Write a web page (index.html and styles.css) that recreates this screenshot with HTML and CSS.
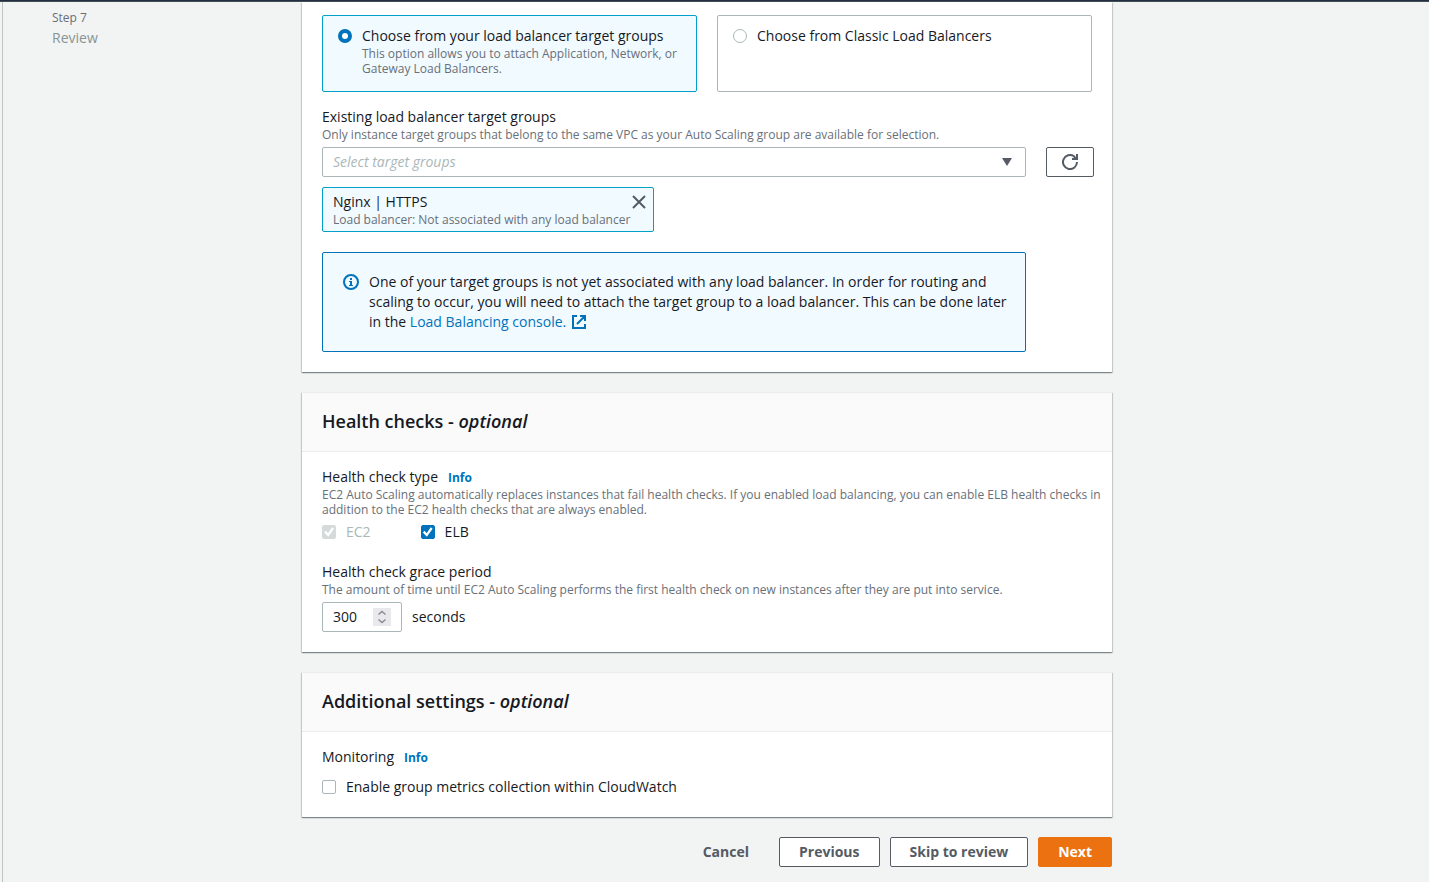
FILE: index.html
```html
<!DOCTYPE html>
<html lang="en">
<head>
<meta charset="utf-8">
<meta name="viewport" content="width=device-width, initial-scale=1">
<title>Create Auto Scaling group</title>
<link rel="stylesheet" href="styles.css">
</head>
<body>
<header class="topbar"></header>
<div class="page">
  <nav class="steps" aria-label="Steps">
    <div class="step-number">Step 7</div>
    <div class="step-name">Review</div>
  </nav>
  <main class="content">
    <section class="card card-continued">
      <div class="card-body">
        <div class="tiles">
          <label class="tile tile-selected">
            <input class="radio" type="radio" name="lb" checked>
            <span class="tile-text">
              <span class="label">Choose from your load balancer target groups</span>
              <span class="hint">This option allows you to attach Application, Network, or Gateway Load Balancers.</span>
            </span>
          </label>
          <label class="tile">
            <input class="radio" type="radio" name="lb">
            <span class="tile-text"><span class="label">Choose from Classic Load Balancers</span></span>
          </label>
        </div>
        <div class="field">
          <label class="label" for="groups">Existing load balancer target groups</label>
          <div class="hint">Only instance target groups that belong to the same VPC as your Auto Scaling group are available for selection.</div>
          <div class="select-row">
            <div class="select-wrap">
              <select class="select" id="groups"><option>Select target groups</option></select>
              <svg class="caret" width="10" height="8" viewBox="0 0 10 8" aria-hidden="true"><path d="M0 0h10L5 8z" fill="#545b64"/></svg>
            </div>
            <button class="button button-icon" type="button" aria-label="Refresh">
              <svg width="16" height="16" viewBox="0 0 16 16" fill="none" stroke="#545b64" stroke-width="2" aria-hidden="true"><path d="M15 8a7 7 0 1 1-3-5.700L14 5"/><path d="M15 0v5h-5"/></svg>
            </button>
          </div>
          <div class="token">
            <div>
              <div class="label">Nginx | HTTPS</div>
              <div class="hint">Load balancer: Not associated with any load balancer</div>
            </div>
            <button class="token-close" type="button" aria-label="Remove Nginx">
              <svg width="14" height="14" viewBox="0 0 14 14" fill="none" stroke="#545b64" stroke-width="2" aria-hidden="true"><path d="M1 1l12 12M13 1L1 13"/></svg>
            </button>
          </div>
        </div>
        <div class="alert">
          <svg class="alert-icon" width="16" height="16" viewBox="0 0 16 16" fill="none" stroke="#0073bb" stroke-width="2" aria-hidden="true"><circle cx="8" cy="8" r="7"/><path d="M7 4h2v2H7zM6 7h3v4h1v1H6v-1h1V8H6z" fill="#0073bb" stroke="none"/></svg>
          <p class="alert-text">One of your target groups is not yet associated with any load balancer. In order for routing and scaling to occur, you will need to attach the target group to a load balancer. This can be done later in the <a class="link" href="#">Load Balancing console.<svg class="external" width="14" height="14" viewBox="0 0 14 14" fill="none" stroke="#0073bb" stroke-width="2" aria-hidden="true"><path d="M5 1H1v12h12V9M8 1h5v5M13 1L5 9"/></svg></a></p>
        </div>
      </div>
    </section>

    <section class="card">
      <h2 class="card-title">Health checks - <em>optional</em></h2>
      <div class="card-body">
        <div class="field">
          <div class="label-row"><span class="label">Health check type</span><a class="info" href="#">Info</a></div>
          <div class="hint hint-wide">EC2 Auto Scaling automatically replaces instances that fail health checks. If you enabled load balancing, you can enable ELB health checks in addition to the EC2 health checks that are always enabled.</div>
          <div class="checks">
            <label class="check check-disabled"><input class="checkbox" type="checkbox" checked disabled>EC2</label>
            <label class="check"><input class="checkbox" type="checkbox" checked>ELB</label>
          </div>
        </div>
        <div class="field">
          <label class="label" for="grace">Health check grace period</label>
          <div class="hint">The amount of time until EC2 Auto Scaling performs the first health check on new instances after they are put into service.</div>
          <div class="number-row">
            <div class="number">
              <input class="number-input" id="grace" type="number" value="300">
              <svg class="spinner" width="18" height="18" viewBox="0 0 18 18" fill="none" stroke="#8b8b93" stroke-width="1.500" aria-hidden="true"><path d="M5.500 6.500L9 3.500l3.500 3M5.500 11.500L9 14.500l3.500-3"/></svg>
            </div>
            <span>seconds</span>
          </div>
        </div>
      </div>
    </section>

    <section class="card">
      <h2 class="card-title">Additional settings - <em>optional</em></h2>
      <div class="card-body">
        <div class="label-row"><span class="label">Monitoring</span><a class="info" href="#">Info</a></div>
        <label class="check check-single"><input class="checkbox" type="checkbox">Enable group metrics collection within CloudWatch</label>
      </div>
    </section>

    <div class="actions">
      <button class="button button-link" type="button">Cancel</button>
      <button class="button" type="button">Previous</button>
      <button class="button" type="button">Skip to review</button>
      <button class="button button-primary" type="button">Next</button>
    </div>
  </main>
</div>
</body>
</html>
```
FILE: styles.css
```css
* { box-sizing: border-box; }
body {
  margin: 0;
  background: #f2f3f3;
  color: #16191f;
  font: 14px/20px "Open Sans", "Noto Sans", sans-serif;
}
.topbar { height: 2px; background: #232f3e; border-bottom: 1px solid #414c5a; }
.page {
  display: flex;
  min-height: calc(100vh - 2px);
  margin-left: 2px;
  border-left: 1px solid #bfc5c5;
}
.steps { flex: none; width: 299px; padding: 6px 49px; }
.step-number { color: #687078; font-size: 12px; }
.step-name { color: #879596; }
.content {
  flex: 1;
  min-width: 0;
  max-width: 810px;
  display: flex;
  flex-direction: column;
  gap: 20px;
}
.card {
  background: #fff;
  border-top: 1px solid #eaeded;
  box-shadow: 0 1px 1px 0 rgba(0, 28, 36, .3), 1px 1px 1px 0 rgba(0, 28, 36, .15), -1px 1px 1px 0 rgba(0, 28, 36, .15);
}
.card-continued { border-top: 0; }
.card-continued .card-body { padding-top: 13px; }
.card-title {
  margin: 0;
  padding: 17px 20px 19px;
  background: #fafafa;
  border-bottom: 1px solid #eaeded;
  font-size: 18px;
  line-height: 22px;
  font-weight: 600;
}
.card-body { padding: 15px 20px 20px; }
.label { display: block; }
.hint { display: block; color: #687078; font-size: 12px; line-height: 15px; }
.hint-wide { margin-right: -10px; }
.tiles { display: grid; grid-template-columns: 1fr 1fr; gap: 20px; margin-bottom: 15px; }
.tile {
  display: flex;
  gap: 10px;
  min-height: 77px;
  padding: 10px 15px;
  border: 1px solid #aab7b8;
  border-radius: 2px;
}
.tile-selected { background: #f1faff; border-color: #00a1c9; }
.radio {
  appearance: none;
  flex: none;
  width: 14px;
  height: 14px;
  margin: 3px 0 0;
  border: 1px solid #aab7b8;
  border-radius: 50%;
  background: #fff;
}
.radio:checked { border: 4px solid #0073bb; }
.field + .field { margin-top: 20px; }
.select-row { display: flex; gap: 20px; margin: 5px 0 10px; margin-right: -2px; }
.select-wrap { flex: 1; display: grid; align-items: center; }
.select, .caret { grid-area: 1 / 1; }
.select {
  appearance: none;
  width: 100%;
  height: 30px;
  padding: 0 10px;
  border: 1px solid #aab7b8;
  border-radius: 2px;
  background: #fff;
  color: #aab7b8;
  font: inherit;
  font-style: italic;
}
.caret { justify-self: end; margin-right: 14px; pointer-events: none; }
.button {
  height: 30px;
  padding: 0 19px;
  border: 1px solid #545b64;
  border-radius: 2px;
  background: #fff;
  color: #545b64;
  font: inherit;
  font-weight: 700;
}
.button-icon { display: grid; place-items: center; width: 48px; padding: 0; }
.button-link { background: transparent; border-color: transparent; }
.button-primary { background: #ec7211; border-color: #ec7211; color: #fff; }
.token {
  display: flex;
  justify-content: space-between;
  width: 332px;
  padding: 4px 7px 4px 10px;
  border: 1px solid #00a1c9;
  border-radius: 2px;
  background: #f1faff;
}
.token > div { flex: 1; min-width: 0; white-space: nowrap; }
.token-close { height: 14px; margin-top: 3px; padding: 0; border: 0; background: none; line-height: 0; }
.alert {
  display: flex;
  gap: 10px;
  margin: 20px 66px 0 0;
  padding: 19px 10px 19px 20px;
  border: 1px solid #0073bb;
  border-radius: 2px;
  background: #f1faff;
}
.alert-icon { flex: none; margin-top: 2px; }
.alert-text { margin: 0; }
.link { color: #0073bb; text-decoration: none; }
.external { margin-left: 6px; vertical-align: -2px; }
.label-row { display: flex; align-items: baseline; gap: 10px; }
.info { color: #0073bb; font-size: 12px; line-height: 16px; font-weight: 700; text-decoration: none; }
.checks { display: flex; gap: 50px; margin-top: 5px; }
.check { display: flex; gap: 10px; align-items: center; }
.check-disabled { color: #aab7b8; }
.check-single { margin-top: 10px; }
.checkbox {
  appearance: none;
  display: grid;
  place-items: center;
  width: 14px;
  height: 14px;
  margin: 0;
  border: 1px solid #aab7b8;
  border-radius: 2px;
  background: #fff;
}
.checkbox:checked { background: #0073bb; border-color: #0073bb; }
.checkbox:disabled { background: #d5dbdb; border-color: #d5dbdb; }
.checkbox:checked::before {
  content: "";
  width: 12px;
  height: 12px;
  background: #fff;
  clip-path: polygon(10% 54%, 24% 40%, 42% 60%, 76% 10%, 92% 22%, 44% 90%);
}
.number-row { display: flex; gap: 10px; align-items: center; margin-top: 5px; }
.number {
  display: flex;
  align-items: center;
  width: 80px;
  height: 30px;
  padding: 0 10px;
  border: 1px solid #aab7b8;
  border-radius: 2px;
}
.number-input {
  appearance: textfield;
  flex: 1;
  min-width: 0;
  padding: 0;
  border: 0;
  background: none;
  color: inherit;
  font: inherit;
}
.number-input::-webkit-inner-spin-button { appearance: none; }
.spinner { flex: none; background: #e9e9ed; }
.actions { display: flex; justify-content: flex-end; gap: 10px; padding-bottom: 15px; }
```
